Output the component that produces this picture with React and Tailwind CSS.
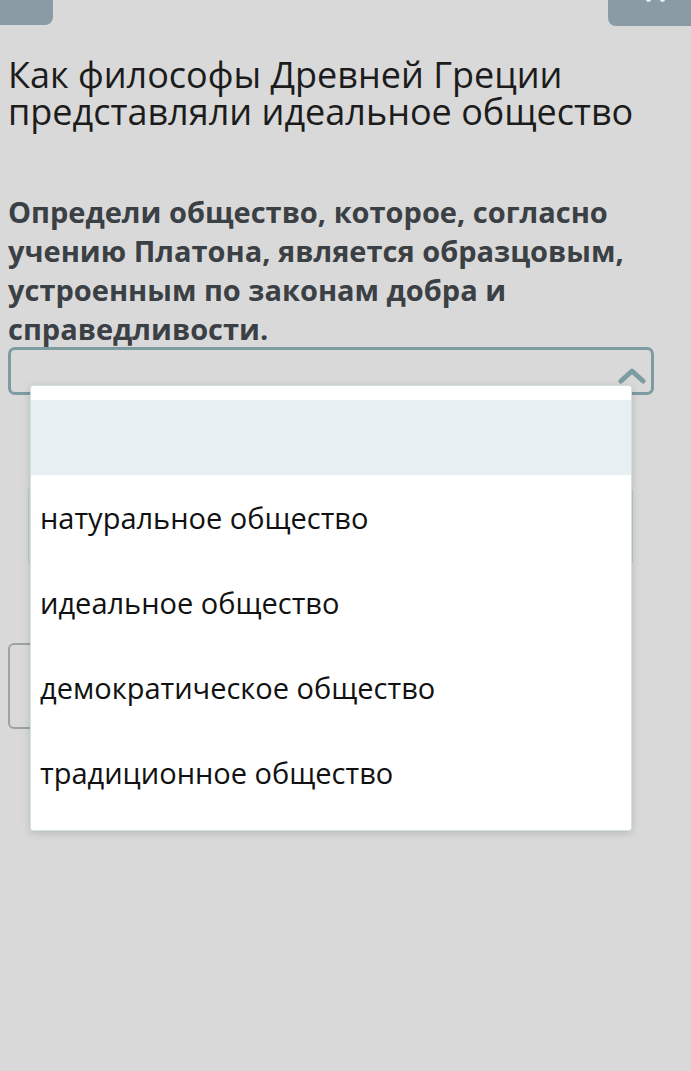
import React from "react";

export default function App() {
  const options = [
    "натуральное общество",
    "идеальное общество",
    "демократическое общество",
    "традиционное общество",
  ];
  return (
    <div
      className="relative w-[691px] h-[1071px] overflow-hidden bg-[#d9d9d9]"
      style={{ fontFamily: '"Open Sans", "Noto Sans", sans-serif' }}
    >
      {/* top buttons */}
      <div className="flex justify-between">
        <div className="w-[53px] h-[25px] bg-[#8a9ba6] rounded-br-[8px]" />
        <div className="relative w-[83px] h-[26px] bg-[#8a9ba6] rounded-bl-[8px]">
          <div className="absolute left-[38px] -top-[3px] w-[5px] h-[5px] rounded-full bg-[#e8ecef]" />
          <div className="absolute left-[52px] -top-[3px] w-[5px] h-[5px] rounded-full bg-[#e8ecef]" />
        </div>
      </div>

      <div className="px-[8px]">
        <h1 className="mt-[30px] text-[36px] leading-[37px] text-[#1c1c1c]">
          Как философы Древней Греции представляли идеальное общество
        </h1>
        <p className="mt-[62px] text-[29px] leading-[39px] font-bold text-[#3b4045] pr-[20px]">
          Определи общество, которое, согласно учению Платона, является образцовым, устроенным по законам добра и справедливости.
        </p>
        <div className="-mt-[1px] mr-[29px] h-[48px] rounded-[7px] border-[3px] border-[#7d9ca2] flex items-center justify-end pr-[5px]">
          <svg width="28" height="18" viewBox="0 0 28 18" className="mt-[8px]">
            <path d="M3 15 L14 5 L25 15" fill="none" stroke="#7d9ca2" strokeWidth="5" strokeLinecap="round" strokeLinejoin="round" />
          </svg>
        </div>
        {/* behind content */}
        <div className="mt-[92px] ml-[20px] mr-[50px] h-[78px] border border-[#c2c6c8] rounded-[4px]" />
        <div className="mt-[78px] w-[200px] h-[86px] border-[2px] border-[#9ea2a4] rounded-[6px]" />
      </div>

      {/* dropdown overlay */}
      <div className="absolute left-[30px] top-[385px] w-[602px] h-[446px] bg-white border border-[#cfe3e3] rounded-[3px] shadow-[0_2px_8px_rgba(0,0,0,0.15)] pt-[14px]">
        <div className="h-[75px] bg-[#e8eff2]" />
        {options.map((o) => (
          <div key={o} className="h-[85px] flex items-center pl-[9px] text-[29px] text-[#111]">
            {o}
          </div>
        ))}
      </div>
    </div>
  );
}
